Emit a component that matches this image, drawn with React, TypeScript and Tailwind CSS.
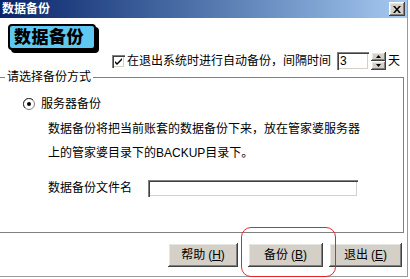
import React from "react";

const FONT = { fontFamily: '"Liberation Sans", "Noto Sans CJK SC", sans-serif' };

const bevelBtn =
  "bg-[#d4d0c8] shadow-[inset_-1px_-1px_#404040,inset_1px_1px_#ffffff,inset_-2px_-2px_#808080,inset_2px_2px_#e8e6e0]";
const sunken =
  "bg-white shadow-[inset_1px_1px_#808080,inset_2px_2px_#404040,inset_-1px_-1px_#ffffff,inset_-2px_-2px_#d4d0c8]";

function Checkbox() {
  return (
    <div className={`flex h-[13px] w-[13px] shrink-0 items-center justify-center ${sunken}`}>
      <svg width="9" height="9" viewBox="0 0 9 9">
        <path d="M1 4 L3 6 L8 1 L8 3 L3 8 L1 6 Z" fill="#000" />
      </svg>
    </div>
  );
}

function Radio() {
  return (
    <svg width="12" height="12" viewBox="0 0 12 12" className="shrink-0">
      <circle cx="6" cy="6" r="5.5" fill="#fff" stroke="#808080" />
      <path d="M2 10 A5 5 0 0 1 10 2" fill="none" stroke="#404040" />
      <circle cx="6" cy="6" r="2" fill="#000" />
    </svg>
  );
}

function Spinner() {
  return (
    <div className="flex h-[18px] w-[15px] flex-col">
      <div className={`flex h-[9px] items-center justify-center ${bevelBtn}`}>
        <svg width="5" height="3" viewBox="0 0 5 3">
          <path d="M0 3 L2.5 0 L5 3 Z" fill="#000" />
        </svg>
      </div>
      <div className={`flex h-[9px] items-center justify-center ${bevelBtn}`}>
        <svg width="5" height="3" viewBox="0 0 5 3">
          <path d="M0 0 L2.5 3 L5 0 Z" fill="#000" />
        </svg>
      </div>
    </div>
  );
}

function WinButton({ label, hotkey, width }: { label: string; hotkey: string; width: string }) {
  return (
    <button
      className={`flex h-[24px] items-center justify-center text-[12px] text-black ${bevelBtn} ${width}`}
    >
      {label}
      <span className="ml-[3px]">
        (<span className="underline">{hotkey}</span>)
      </span>
    </button>
  );
}

export default function App() {
  return (
    <div className="relative h-[279px] w-[410px] overflow-hidden bg-white text-black" style={FONT}>
      <div className="h-[277px] w-[408px] border-r border-b border-[#9a9a9a]">
        {/* title bar */}
        <div className="flex h-[18px] items-center justify-between bg-gradient-to-r from-[#0a246a] to-[#a6caf0] pl-[2px] pr-[2px]">
          <span className="text-[12px] font-bold leading-none text-white">数据备份</span>
          <div className={`flex h-[14px] w-[16px] items-center justify-center ${bevelBtn}`}>
            <svg width="8" height="7" viewBox="0 0 8 7">
              <path d="M0 0 L2 0 L4 2.5 L6 0 L8 0 L5 3.5 L8 7 L6 7 L4 4.5 L2 7 L0 7 L3 3.5 Z" fill="#000" />
            </svg>
          </div>
        </div>

        {/* big header button */}
        <div className="ml-[8px] mt-[6px] flex h-[26px] w-[88px] items-center rounded-[4px] border-2 border-black bg-[#5ec8f2] pl-[4px] shadow-[3px_3px_0_#000]">
          <span className="text-[17px] font-black leading-none tracking-[0.5px]">数据备份</span>
        </div>

        {/* auto backup row */}
        <div className="mt-[2px] flex h-[18px] items-center pl-[112px] text-[12px]">
          <Checkbox />
          <span className="ml-[2px] whitespace-nowrap">在退出系统时进行自动备份，间隔时间</span>
          <div className={`ml-[6px] flex h-[18px] w-[32px] items-center pl-[3px] ${sunken}`}>3</div>
          <div className="ml-[2px]">
            <Spinner />
          </div>
          <span className="ml-[2px]">天</span>
        </div>

        {/* group box */}
        <fieldset className="ml-[-2px] w-[406px] border border-l-0 border-[#808080] px-0 pb-[35px] text-[12px]">
          <legend className="ml-[7px] px-[2px] leading-[14px]">请选择备份方式</legend>

          <div className="mt-[13px] flex h-[14px] items-center pl-[25px]">
            <Radio />
            <span className="ml-[6px]">服务器备份</span>
          </div>

          <div className="mt-[6px] pl-[50px] leading-[24px]">
            <div>数据备份将把当前账套的数据备份下来，放在管家婆服务器</div>
            <div>上的管家婆目录下的BACKUP目录下。</div>
          </div>

          <div className="mt-[14px] flex h-[18px] items-center pl-[50px]">
            <span className="w-[100px]">数据备份文件名</span>
            <div className={`h-[17px] w-[210px] ${sunken}`} />
          </div>
        </fieldset>

        {/* buttons */}
        <div className="mt-[10px] flex pl-[168px]">
          <WinButton label="帮助" hotkey="H" width="w-[70px]" />
          <div className="ml-[10px]">
            <WinButton label="备份" hotkey="B" width="w-[75px]" />
          </div>
          <div className="ml-[6px]">
            <WinButton label="退出" hotkey="E" width="w-[73px]" />
          </div>
        </div>
      </div>

      {/* red annotation */}
      <div className="absolute left-[241px] top-[227px] h-[50px] w-[95px] rounded-[10px] border border-[#e8262a]" />
    </div>
  );
}
